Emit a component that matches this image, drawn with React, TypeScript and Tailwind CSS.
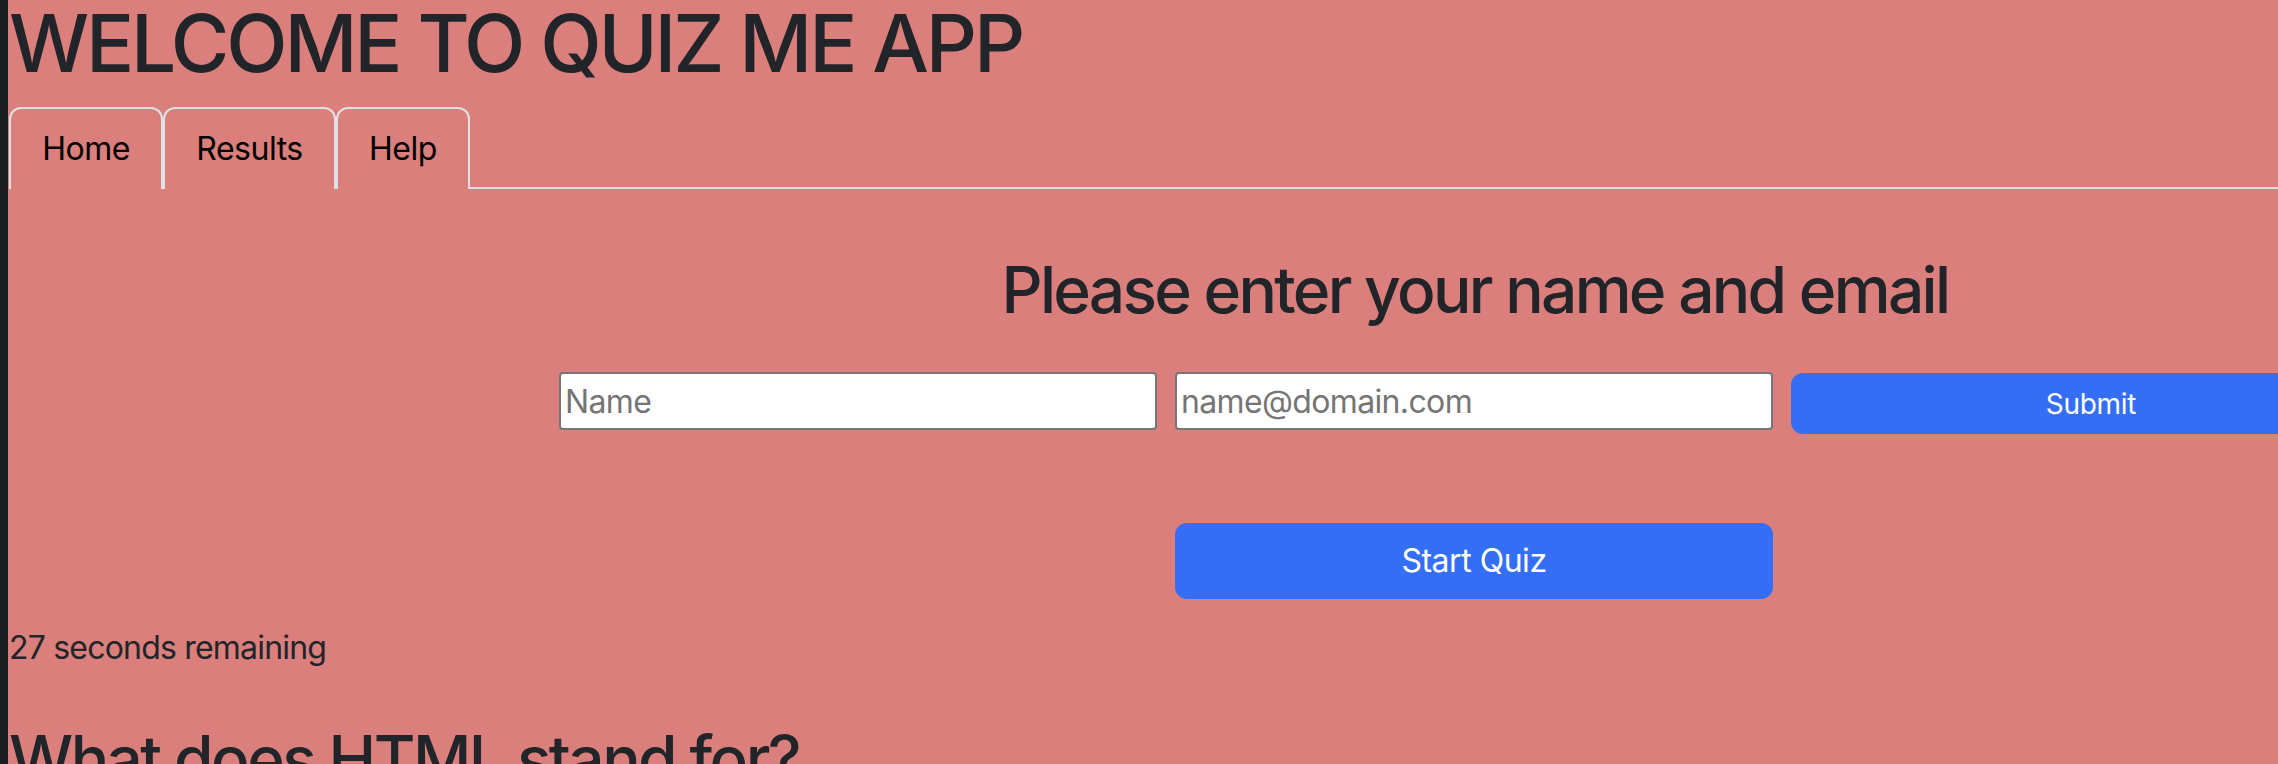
import React from 'react';

const tabs = [
  { label: 'Home', w: 'w-[154px]' },
  { label: 'Results', w: 'w-[173px]' },
  { label: 'Help', w: 'w-[134px]' },
];

const App: React.FC = () => (
  <div className="w-[2278px] h-[764px] overflow-hidden flex bg-[#da7f7b] text-[#212529] font-['Inter',sans-serif]">
    {/* window edge */}
    <div className="w-[8px] shrink-0 bg-[#1c1d1f]"></div>

    <div className="flex-1 min-w-0 pl-px">
      <h1 className="text-[80px] leading-[86px] mb-[21px] font-medium tracking-[-0.04em] whitespace-nowrap">
        WELCOME TO QUIZ ME APP
      </h1>

      <div className="flex items-end">
        {tabs.map((t) => (
          <div
            key={t.label}
            className={`${t.w} shrink-0 border-2 border-b-0 border-[#dee2e6] rounded-t-[12px] py-[16px] text-center text-[32px] leading-[48px] tracking-[-0.015em] text-black`}
          >
            {t.label}
          </div>
        ))}
        <div className="flex-1 border-b-2 border-[#dee2e6]"></div>
      </div>

      <div className="ml-[550px] w-[1832px] pt-[62px]">
        <h2 className="text-[64px] leading-[77px] font-medium tracking-[-0.042em] text-center whitespace-nowrap mb-[44px]">
          Please enter your name and email
        </h2>
        <div className="grid grid-cols-[598px_598px_600px] gap-x-[18px] items-start">
          <input
            placeholder="Name"
            className="h-[58px] bg-white border-2 border-[#767676] rounded-[4px] px-[4px] text-[32px] tracking-[-0.02em] placeholder:text-[#757575] outline-none"
          />
          <input
            placeholder="name@domain.com"
            className="h-[58px] bg-white border-2 border-[#767676] rounded-[4px] px-[4px] text-[32px] tracking-[-0.02em] placeholder:text-[#757575] outline-none"
          />
          <button className="mt-px h-[61px] bg-[#346ef5] rounded-[12px] text-white text-[28px] tracking-[-0.01em]">
            Submit
          </button>
          <button className="col-start-2 mt-[89px] h-[76px] bg-[#346ef5] rounded-[12px] text-white text-[32px] tracking-[-0.015em]">
            Start Quiz
          </button>
        </div>
      </div>

      <p className="mt-[25px] text-[32px] leading-[48px] tracking-[-0.025em]">27 seconds remaining</p>
      <h2 className="mt-[48px] text-[64px] leading-[77px] font-medium tracking-[-0.04em] whitespace-nowrap">
        What does HTML stand for?
      </h2>
    </div>
  </div>
);

export default App;
